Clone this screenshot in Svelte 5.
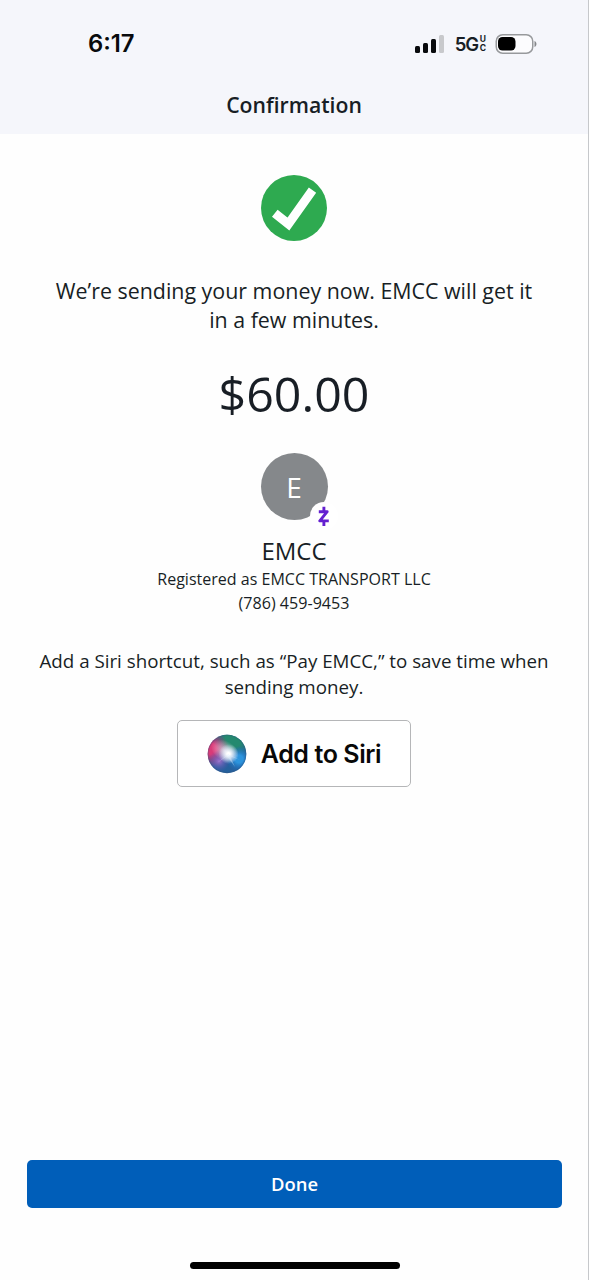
<script lang="ts">
    const payment = {
        amount: '$60.00',
        name: 'EMCC',
        registeredName: 'EMCC TRANSPORT LLC',
        phone: '(786) 459-9453'
    };

    let initial = $derived(payment.name.charAt(0));
</script>

<div class="screen">
    <header class="header">
        <div class="status-bar">
            <span class="time">6:17</span>
            <div class="status-icons">
                <svg class="signal" width="29" height="18" viewBox="0 0 29 18">
                    <rect x="0" y="11" width="5" height="7" rx="1.5" fill="#080a0d" />
                    <rect x="8" y="8" width="5" height="10" rx="1.5" fill="#080a0d" />
                    <rect x="16" y="4" width="5" height="14" rx="1.5" fill="#080a0d" />
                    <rect x="24" y="0" width="5" height="18" rx="1.5" fill="#c8c9cc" />
                </svg>
                <span class="network">5G</span>
                <span class="network-suffix"><span>U</span><span>C</span></span>
                <svg class="battery" width="42" height="20" viewBox="0 0 42 20">
                    <rect x="1.25" y="0.75" width="36.5" height="18.5" rx="6.5" fill="#fcfcfe" stroke="#97999c" stroke-width="1.5" />
                    <rect x="3" y="3" width="17.5" height="13.5" rx="4.5" fill="#000" />
                    <path d="M39.5 7c2.6 1 2.6 5 0 6z" fill="#85878a" />
                </svg>
            </div>
        </div>
        <h1>Confirmation</h1>
    </header>

    <main class="content">
        <svg class="check" width="66" height="66" viewBox="0 0 66 66">
            <circle cx="33" cy="33" r="33" fill="#2eaa50" />
            <path d="M13.8 38.2l13.6 10.8L51.5 15.2" fill="none" stroke="#fff" stroke-width="9" stroke-linejoin="miter" />
        </svg>

        <p class="message">We’re sending your money now. {payment.name} will get it<br />in a few minutes.</p>

        <p class="amount">{payment.amount}</p>

        <div class="avatar">
            <span>{initial}</span>
            <svg class="badge" width="28" height="28" viewBox="0 0 28 28">
                <circle cx="14" cy="14" r="14" fill="#fff" />
                <path d="M8.8 9.7h8.4L9.8 18.9h9M13.9 4.8v4.9M13.9 18.9v5" fill="none" stroke="#6420d0" stroke-width="2.9" stroke-linejoin="round" />
            </svg>
        </div>

        <h2>{payment.name}</h2>
        <p class="registered">Registered as {payment.registeredName}</p>
        <p class="phone">{payment.phone}</p>

        <p class="siri-text">Add a Siri shortcut, such as “Pay {payment.name},” to save time when<br />sending money.</p>

        <button class="siri-button">
            <svg width="40" height="40" viewBox="0 0 40 40">
                <defs>
                    <clipPath id="orb"><circle cx="20" cy="20" r="19.3" /></clipPath>
                    <radialGradient id="pink"><stop offset="0.3" stop-color="#d93a78" /><stop offset="1" stop-color="#c52b62" stop-opacity="0" /></radialGradient>
                    <radialGradient id="green"><stop offset="0.4" stop-color="#24896f" /><stop offset="1" stop-color="#24816f" stop-opacity="0" /></radialGradient>
                    <radialGradient id="blue"><stop offset="0.3" stop-color="#2c94dd" /><stop offset="1" stop-color="#1769bd" stop-opacity="0" /></radialGradient>
                    <radialGradient id="violet"><stop offset="0" stop-color="#9a72cc" /><stop offset="1" stop-color="#5d4db0" stop-opacity="0" /></radialGradient>
                    <radialGradient id="glow"><stop offset="0.15" stop-color="#fff" /><stop offset="0.45" stop-color="#eef6ff" stop-opacity="0.7" /><stop offset="1" stop-color="#d4eaff" stop-opacity="0" /></radialGradient>
                    <radialGradient id="haze"><stop offset="0" stop-color="#f5dceb" stop-opacity="0.8" /><stop offset="1" stop-color="#f5dceb" stop-opacity="0" /></radialGradient>
                </defs>
                <g clip-path="url(#orb)">
                    <rect width="40" height="40" fill="#26609c" />
                    <circle cx="26" cy="6" r="20" fill="url(#green)" />
                    <circle cx="4" cy="15" r="18" fill="url(#pink)" />
                    <circle cx="32" cy="25" r="13" fill="url(#blue)" />
                    <circle cx="12" cy="27" r="11" fill="url(#violet)" />
                    <ellipse cx="18" cy="17" rx="15" ry="10" fill="url(#haze)" transform="rotate(30 18 17)" />
                    <circle cx="21.5" cy="20" r="10" fill="url(#glow)" />
                    <path d="M21 20L33 26 23 22 28 33 20 22 10 29z" fill="#dceeff" opacity="0.4" />
                    <circle cx="20" cy="20" r="18.7" fill="none" stroke="#3c5673" stroke-opacity="0.3" />
                </g>
            </svg>
            <span>Add to Siri</span>
        </button>
    </main>

    <footer class="footer">
        <button class="done">Done</button>
        <div class="home-indicator"></div>
    </footer>
</div>

<style>
    :global(body) {
        background: #fff;
    }

    .screen {
        box-sizing: border-box;
        display: flex;
        flex-direction: column;
        width: 589px;
        height: 1280px;
        border-right: 1px solid #c6c8cb;
        background: #fefefe;
        color: #181e25;
        font-family: 'Open Sans', sans-serif;
        white-space: nowrap;
    }

    h1,
    h2,
    p {
        margin: 0;
        font-weight: 400;
    }

    .header {
        box-sizing: border-box;
        height: 134px;
        background: #f5f6fb;
    }

    .status-bar {
        box-sizing: border-box;
        display: flex;
        align-items: center;
        justify-content: space-between;
        height: 74px;
        padding: 14px 51px 0 88px;
    }

    .time {
        padding-bottom: 1px;
        font-family: Inter, sans-serif;
        font-size: 23.8px;
        font-weight: 600;
        line-height: 28px;
        color: #080a0d;
    }

    .status-icons {
        display: flex;
        align-items: center;
    }

    .network {
        margin-left: 11px;
        font-family: Inter, sans-serif;
        font-size: 18.5px;
        font-weight: 600;
        letter-spacing: -1.3px;
    }

    .network-suffix {
        display: flex;
        flex-direction: column;
        margin: 0 9px 0 2px;
        font-family: Inter, sans-serif;
        font-size: 8.5px;
        font-weight: 700;
        line-height: 9px;
    }

    h1 {
        padding-top: 16px;
        font-size: 21.2px;
        font-weight: 600;
        line-height: 30px;
        text-align: center;
    }

    .content {
        display: flex;
        flex: 1;
        flex-direction: column;
        align-items: center;
        padding-top: 41px;
        text-align: center;
    }

    .message {
        margin-top: 35px;
        font-size: 21.4px;
        line-height: 29px;
    }

    .amount {
        margin-top: 26px;
        font-size: 48.3px;
        line-height: 66px;
    }

    .avatar {
        position: relative;
        display: flex;
        align-items: center;
        justify-content: center;
        width: 67px;
        height: 67px;
        margin-top: 27px;
        border-radius: 50%;
        background: #85888b;
        color: #fff;
        font-size: 28px;
    }

    .badge {
        position: absolute;
        right: -10px;
        bottom: -10px;
    }

    h2 {
        margin-top: 15px;
        font-size: 24px;
        line-height: 32px;
    }

    .registered {
        font-size: 16.05px;
        line-height: 24px;
    }

    .phone {
        font-size: 16.1px;
        line-height: 24px;
    }

    .siri-text {
        margin-top: 33px;
        font-size: 18.75px;
        line-height: 26px;
    }

    .siri-button {
        display: flex;
        align-items: center;
        justify-content: center;
        gap: 14px;
        box-sizing: border-box;
        width: 234px;
        height: 67px;
        margin-top: 20px;
        border: 1.5px solid #b5b6b8;
        border-radius: 5px;
        background: #fff;
        color: #080808;
        font-family: Inter, sans-serif;
        font-size: 25px;
        font-weight: 600;
        letter-spacing: -0.4px;
    }

    .footer {
        display: flex;
        flex-direction: column;
        align-items: center;
        padding: 0 26px 11px 27px;
    }

    .done {
        width: 100%;
        height: 48px;
        padding: 0 0 2px;
        border: 0;
        border-radius: 5px;
        background: #005eb9;
        color: #fff;
        font-family: 'Open Sans', sans-serif;
        font-size: 18.4px;
        font-weight: 600;
    }

    .home-indicator {
        width: 210px;
        height: 7px;
        margin-top: 54px;
        border-radius: 4px;
        background: #000;
    }
</style>
